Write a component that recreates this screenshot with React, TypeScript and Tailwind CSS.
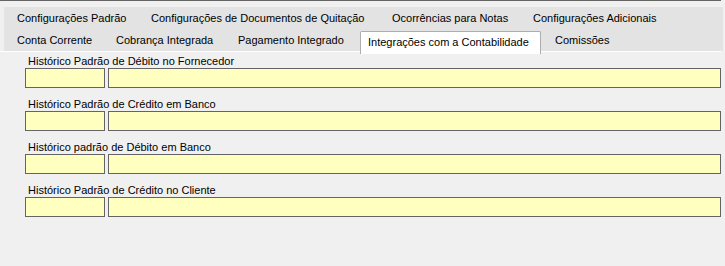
const row1 = [
  { label: "Configurações Padrão", w: "w-[134px]" },
  { label: "Configurações de Documentos de Quitação", w: "w-[241px]" },
  { label: "Ocorrências para Notas", w: "w-[141px]" },
  { label: "Configurações Adicionais", w: "w-[180px]" },
];

const row2 = [
  { label: "Conta Corrente", w: "w-[99px]" },
  { label: "Cobrança Integrada", w: "w-[122px]" },
  { label: "Pagamento Integrado", w: "w-[130px]" },
];

const fields = [
  "Histórico Padrão de Débito no Fornecedor",
  "Histórico Padrão de Crédito em Banco",
  "Histórico padrão de Débito em Banco",
  "Histórico Padrão de Crédito no Cliente",
];

export default function App() {
  return (
    <div className="w-[725px] h-[266px] bg-[#f0f0f0] overflow-hidden text-black text-[11px] font-['Liberation_Sans',Arial,sans-serif]">
      <div className="h-px w-[721px] bg-[#646464]" />

      {/* tab strip */}
      <div className="mt-[6px] ml-[4px] w-[719px] h-[44px] bg-[#e3e3e3] flex flex-col">
        <div className="flex h-[22px] items-center pl-[5px]">
          {row1.map((t) => (
            <div key={t.label} className={`${t.w} pl-[8px] whitespace-nowrap leading-[22px]`}>
              {t.label}
            </div>
          ))}
        </div>
        <div className="flex h-[22px] items-center pl-[5px]">
          {row2.map((t) => (
            <div key={t.label} className={`${t.w} pl-[8px] whitespace-nowrap leading-[22px]`}>
              {t.label}
            </div>
          ))}
          <div className="relative w-[181px] h-[22px] mt-[2px] self-start">
            <div className="absolute inset-0 bottom-[-1px] bg-white border border-b-0 border-[#adadad] rounded-t-[2px] pl-[7px] leading-[20px] whitespace-nowrap z-10">
              Integrações com a Contabilidade
            </div>
          </div>
          <div className="pl-[14px] whitespace-nowrap leading-[22px]">Comissões</div>
        </div>
      </div>
      <div className="h-px w-[721px] bg-white" />

      {/* tab page */}
      <div className="pl-[25px] pt-[2px] flex flex-col gap-[9px]">
        {fields.map((f) => (
          <div key={f} className="flex flex-col">
            <div className="h-[14px] leading-[14px] pl-[3px] whitespace-nowrap">{f}</div>
            <div className="flex gap-[3px]">
              <div className="w-[80px] h-[20px] bg-[#ffffc0] border border-[#646464]" />
              <div className="w-[613px] h-[20px] bg-[#ffffc0] border border-[#646464]" />
            </div>
          </div>
        ))}
      </div>
    </div>
  );
}
